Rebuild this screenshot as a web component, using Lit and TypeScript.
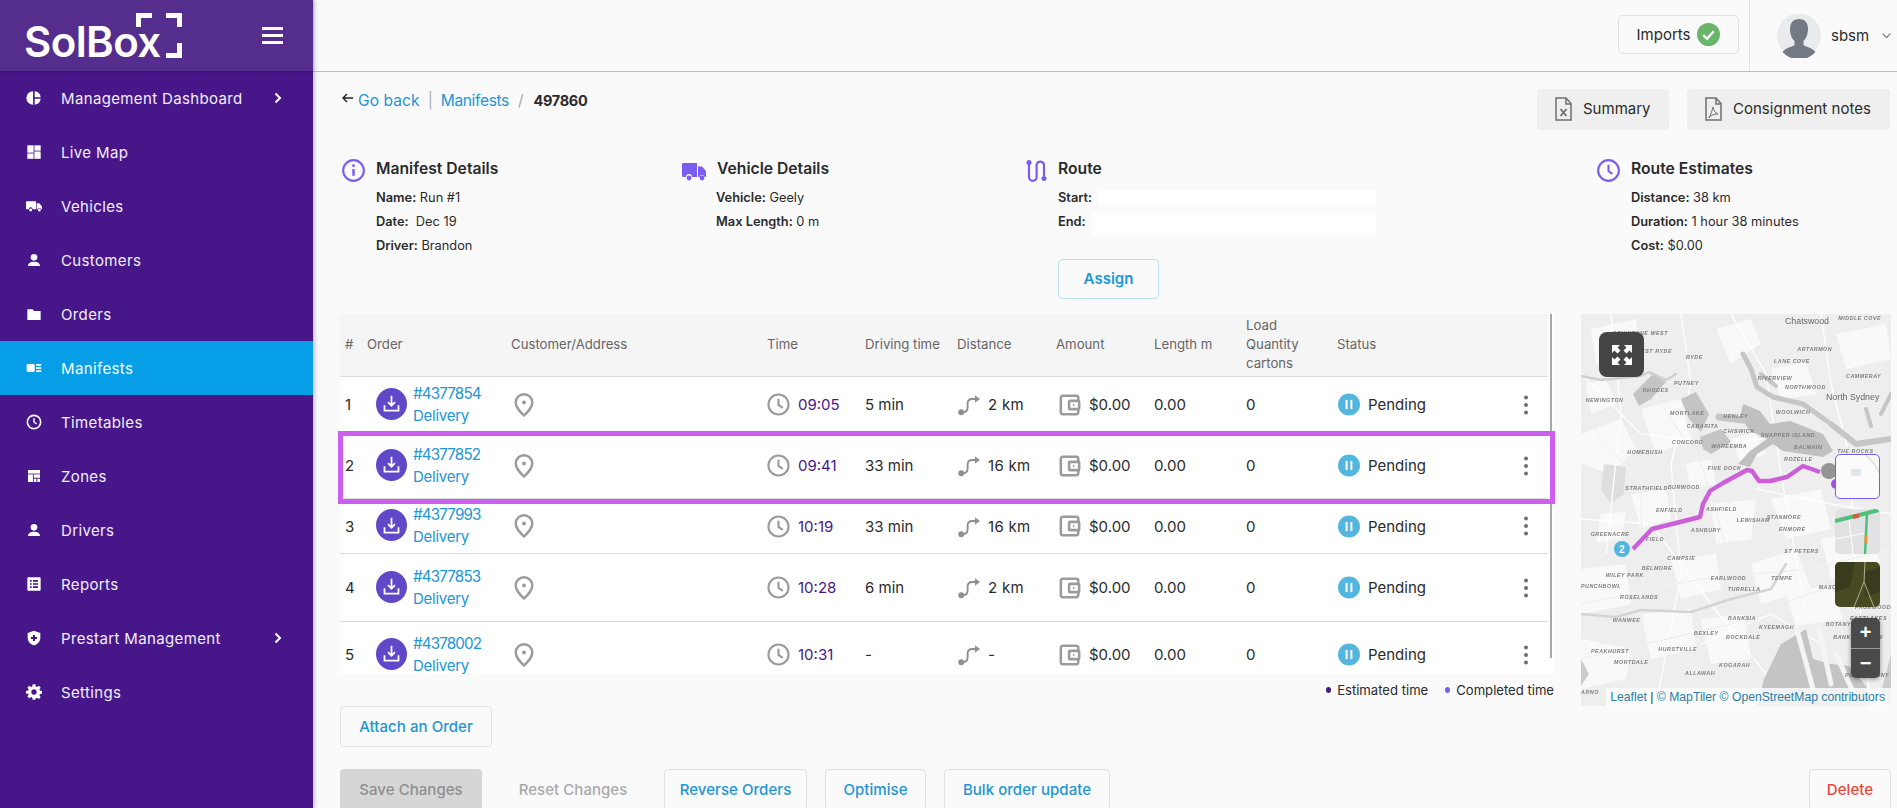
import { LitElement, html, css, svg } from "lit";
import { customElement } from "lit/decorators.js";

const I = {
  pie: svg`<path d="M10.600 2a10 10 0 0 0 0 20z"/><path d="M13 2a10 10 0 0 1 9 9h-9z"/><path d="M13 13.200h9a10 10 0 0 1-9 8.800z"/>`,
  map: svg`<rect x="2" y="2" width="9.400" height="11"/><rect x="12.600" y="2" width="9.400" height="8"/><rect x="2" y="14.200" width="9.400" height="8"/><rect x="12.600" y="11.200" width="9.400" height="11"/>`,
  truck: svg`<path d="M0 6.500C0 5.600.7 5 1.500 5H15v12H10a3 3 0 0 0-6 0H1.500C.7 17 0 16.400 0 15.500z"/><path d="M16 8h4l4 4.600V17h-1.200a3 3 0 0 0-5.600 0H16z"/><circle cx="7" cy="18" r="2.200"/><circle cx="20" cy="18" r="2.200"/>`,
  person: svg`<circle cx="12" cy="8" r="5"/><path d="M3 21c0-4.500 4-6.500 9-6.500s9 2 9 6.500z"/>`,
  folder: svg`<path d="M2 5h8l2 2.500h10V21H2z"/>`,
  card: svg`<rect x="1" y="6" width="12" height="12" rx="2"/><rect x="15" y="6" width="8" height="2.600"/><rect x="15" y="10.700" width="8" height="2.600"/><rect x="15" y="15.400" width="8" height="2.600"/>`,
  clockW: svg`<circle cx="12" cy="12" r="10" fill="none" stroke="currentColor" stroke-width="2.400"/><path d="M12 6.500V12l3.800 3" fill="none" stroke="currentColor" stroke-width="2.200"/>`,
  zones: svg`<rect x="3" y="3" width="18" height="5.400"/><rect x="3" y="9.600" width="7.400" height="11.400"/><rect x="11.600" y="9.600" width="9.400" height="5"/><rect x="11.600" y="16" width="4" height="5"/><rect x="17" y="16" width="4" height="5"/>`,
  report: svg`<path fill-rule="evenodd" d="M3.500 2h17A1.500 1.500 0 0 1 22 3.500v17a1.500 1.500 0 0 1-1.500 1.500h-17A1.500 1.500 0 0 1 2 20.500v-17A1.500 1.500 0 0 1 3.500 2zM6 6v2.500h2.500V6zm4.500 0v2.500H18V6zM6 10.700v2.500h2.500v-2.500zm4.500 0v2.500H18v-2.500zM6 15.500V18h2.500v-2.500zm4.500 0V18H18v-2.500z"/>`,
  shield: svg`<path fill-rule="evenodd" d="M12 1l9.500 3.500v7c0 5.500-4 9.800-9.500 11.500C6.500 21.300 2.500 17 2.500 11.500v-7zM10.500 7.500v3h-3v3h3v3h3v-3h3v-3h-3v-3z"/>`,
  gear: svg`<path fill-rule="evenodd" d="M10 1h4l.7 3.200 1.700.7L19.200 3l2.800 2.800-1.900 2.800.7 1.700L24 11v4l-3.200.6-.7 1.700 1.900 2.800-2.800 2.800-2.800-1.900-1.700.7L14 24h-4l-.6-3.300-1.700-.7-2.800 1.900-2.800-2.800 1.900-2.800-.7-1.700L0 15v-4l3.300-.7.700-1.700L2.100 5.800 4.900 3l2.800 1.900 1.700-.7zM12 8.500a4 4 0 1 0 0 8 4 4 0 0 0 0-8z" transform="translate(0 -.5)"/>`,
};

const nav: [string, any, boolean?, boolean?][] = [
  ["Management Dashboard", I.pie, true],
  ["Live Map", I.map],
  ["Vehicles", I.truck],
  ["Customers", I.person],
  ["Orders", I.folder],
  ["Manifests", I.card, false, true],
  ["Timetables", I.clockW],
  ["Zones", I.zones],
  ["Drivers", I.person],
  ["Reports", I.report],
  ["Prestart Management", I.shield, true],
  ["Settings", I.gear],
];

const rows = [
  ["1", "#4377854", "09:05", "5 min", "2 km"],
  ["2", "#4377852", "09:41", "33 min", "16 km"],
  ["3", "#4377993", "10:19", "33 min", "16 km"],
  ["4", "#4377853", "10:28", "6 min", "2 km"],
  ["5", "#4378002", "10:31", "-", "-"],
];

const labels: [string, number, number][] = [
  ["MIDDLE COVE",805,22],["ARTARMON",682,115],["LANE COVE",612,152],["CAMMERAY",828,197],["RIVERVIEW",563,202],["NORTHWOOD",645,230],
  ["DENISTONE WEST",128,68],["WEST RYDE",197,120],["RYDE",348,140],["PUTNEY",312,218],["RHODES",218,238],["NEWINGTON",47,268],["MORTLAKE",300,308],
  ["HENLEY",460,315],["CABARITA",350,345],["CHISWICK",460,360],["SNAPPER ISLAND",572,374],["WOOLWICH",617,303],["CONCORD",306,394],["WAREEMBA",424,405],
  ["BALMAIN",672,410],["THE ROCKS",802,420],["HOMEBUSH",172,423],["ROZELLE",642,446],["FIVE DOCK",413,473],["STRATHFIELD",166,533],["BURWOOD",293,528],
  ["ENFIELD",258,597],["ASHFIELD",408,594],["LEWISHAM",500,629],["STANMORE",590,619],["ENMORE",627,654],["GREENACRE",62,670],["ASHBURY",363,657],
  ["FIELD",228,684],["ST PETERS",643,722],["CAMPSIE",292,742],["BELMORE",215,771],["WILEY PARK",107,792],["EARLWOOD",422,803],["TEMPE",604,803],
  ["TURRELLA",473,835],["PUNCHBOWL",33,827],["ROSELANDS",150,858],["MASCOT",746,828],["WANWEE",128,927],["BANKSIA",474,922],["ROCKDALE",468,978],
  ["KYEEMAGH",567,948],["BEXLEY",372,967],["BOTANY",767,940],["BANKSMEADOW",790,980],["EASTLAKES",840,922],["PAGEWOOD",855,888],["PEAKHURST",63,1022],
  ["HURSTVILLE",265,1016],["MORTDALE",132,1055],["KOGARAH",447,1062],["ALLAWAH",345,1087],["PORT BOTANY",825,1092],["ARNO",33,1143],
];

const whites = [
  "M0 120 L40 105 L55 135 L30 160 L0 150Z","M60 95 L100 85 L110 125 L75 140Z","M135 15 L170 5 L180 30 L150 50Z","M190 55 L225 48 L235 80 L200 85Z",
  "M50 180 L85 175 L90 205 L60 215Z","M130 190 L175 185 L170 225 L135 230Z","M190 185 L240 175 L250 215 L205 225Z","M0 255 L45 250 L50 290 L0 300Z",
  "M90 245 L135 240 L140 275 L100 285Z","M170 250 L215 235 L230 275 L180 290Z","M60 300 L110 295 L115 335 L70 345Z","M120 305 L165 300 L170 345 L130 350Z",
  "M240 225 L285 215 L300 250 L250 265Z","M255 20 L305 10 L310 45 L265 55Z","M10 15 L55 5 L60 40 L15 50Z","M0 325 L50 335 L45 365 L0 375Z","M205 280 L250 270 L262 305 L215 312Z",
  "M20 200 L45 198 L40 225 L15 228Z","M105 150 L130 145 L135 170 L110 175Z","M5 70 L25 65 L35 90 L10 100Z","M150 125 L175 118 L185 140 L160 150Z",
];
const roads = [
  "M0 100 L60 170 L62 392","M0 235 L120 205 L200 160 L310 130","M0 290 L120 265 L230 255 L310 235","M0 345 L150 310 L200 290 L270 265","M60 60 L120 150 L160 280 L180 392",
  "M150 0 L185 60 L200 160 L225 300","M240 0 L250 70 L268 140 L275 260 L290 392","M0 60 L60 120 L140 130 L220 120","M100 0 L110 70 L90 150 L100 260 L75 392","M30 0 L40 100 L25 240",
  "M175 175 L250 190 L310 200","M120 330 L190 300 L240 330","M0 205 L70 210 L130 290 L210 392",
];

const mapArt = svg`
  <rect width="310" height="392" fill="#eeeeee"/>
  ${whites.map(d => svg`<path d=${d} fill="#f9f9f9"/>`)}
  <path d="M23 150 L45 153 L43 180 L30 190 L20 175Z" fill="#dedede"/>
  ${roads.map(d => svg`<path d=${d} fill="none" stroke="#fff" stroke-width="1.300"/>`)}
  ${roads.slice(0,5).map(d => svg`<path d=${d} fill="none" stroke="#dcdcdc" stroke-width=".6"/>`)}
  <path fill="#c0c0c0" d="M162 90 L179 97 L189 110 L209 107 L222 112 L242 120 L252 137 L242 143 L222 140 L202 137 L192 130 L176 140 L169 153 L157 150 L169 137 L186 125 L169 117 L159 103Z"/>
  <path fill="#c4c4c4" d="M119 123 L140 115 L150 128 L130 140 L122 135Z M52 80 L72 60 L85 68 L70 85 L58 92Z M100 85 L115 78 L128 100 L120 118 L108 105Z"/>
  <g fill="none" stroke="#c6c6c6" stroke-linejoin="round" stroke-linecap="round">
    <path d="M0 62 L20 66 L60 62 L68 58 L85 66 L95 60" stroke="#cfcfcf" stroke-width="2.500"/>
    <path d="M138 103 L162 106" stroke-width="7"/>
    <path d="M162 40 L170 55 L176 73 L192 83 L222 90 L246 107" stroke-width="5"/>
    <path d="M250 110 L275 130 L310 125" stroke-width="6"/>
    <path d="M180 60 L195 72 M285 95 L290 112 M300 100 L310 80" stroke-width="4"/>
    <path d="M0 300 L35 303 L60 296 L110 298 L150 285 L190 275 L205 250" stroke="#d4d4d4" stroke-width="2.500"/>
  </g>
  <path d="M176 392 L183 365 L200 330 L225 315 L232 345 L250 350 L268 352 L285 372 L290 392Z" fill="#c4c4c4"/>
  <path d="M215 312 L232 375 M238 315 L250 370 M255 340 L272 378" stroke="#f4f4f4" stroke-width="5" fill="none" stroke-linecap="round"/>
  <path d="M300 378 L310 340 L310 392Z M0 345 L8 360 L0 372Z" fill="#cccccc"/>
  ${labels.map(([t,x,y]) => svg`<text class="lbl" x=${(x-33)/3} y=${(y-10)/3+2}>${t}</text>`)}
  <text class="city" x="204" y="10">Chatswood</text>
  <text class="city" x="245" y="86">North Sydney</text>
  <polyline points="52,235 71,215 119,203 122,190 129,177 142,169 166,156 171,157 178,167 189,167 206,163 222,152 239,158" fill="none" stroke="#cb5fd9" stroke-width="4.400" stroke-linejoin="round"/>
  <circle cx="248" cy="157" r="8" fill="#959595"/>
  <circle cx="255" cy="170" r="5" fill="#a650e0"/>
  <circle cx="41" cy="235" r="8" fill="#52b6de"/>
  <text class="mk" x="41" y="239">2</text>
`;

@customElement("app-root")
export class AppRoot extends LitElement {
  static styles = css`
    :host { display: block; width: 1897px; height: 808px; overflow: hidden; background: #fafafa; font-family: Inter, "Liberation Sans", sans-serif; color: #2b2b2b; }
    * { box-sizing: border-box; }
    svg { display: block; flex: none; }
    .app { display: flex; height: 808px; }

    .side { width: 313px; flex: none; background: #47178a; color: #f3eefb; box-shadow: 2px 0 4px rgba(60,30,120,.25); position: relative; z-index: 2; }
    .brand { height: 71px; background: #552d8d; box-shadow: 0 1px 2px rgba(0,0,0,.3); display: flex; align-items: center; padding-left: 24px; position: relative; }
    .logo { font-size: 42px; font-weight: 600; color: #fff; letter-spacing: -.6px; line-height: 1; margin-top: 12px; }
    .marks { margin: 13px 0 0 -25px; align-self: flex-start; }
    .burger { margin-left: auto; margin-right: 30px; display: flex; flex-direction: column; gap: 4px; }
    .burger i { display: block; width: 21px; height: 3px; background: #fff; }
    .item { height: 54px; display: flex; align-items: center; padding-left: 26px; font-size: 15px; letter-spacing: .36px; }
    .item.on { background: #069ee6; color: #fff; }
    .item svg.ic { width: 16px; height: 16px; fill: currentColor; color: #fff; margin-right: 19px; }
    .item .chev { margin-left: auto; margin-right: 31px; }

    .main { flex: 1; min-width: 0; display: flex; flex-direction: column; }
    .top { height: 72px; flex: none; border-bottom: 1px solid #bdbdbd; display: flex; justify-content: flex-end; padding-right: 6px; }
    .imports { width: 121px; height: 39px; margin-top: 15px; border: 1px solid #e2e2e2; border-radius: 5px; display: flex; align-items: center; justify-content: center; gap: 7px; font-size: 15px; margin-right: 10px; }
    .user { width: 142px; border-left: 1px solid #e2e2e2; display: flex; align-items: center; padding-left: 27px; font-size: 15px; }
    .user .nm { margin-left: 10px; }
    .user .ch { margin-left: auto; }

    .content { padding: 17px 6px 0 27px; flex: 1; min-height: 0; }
    .crumbs { display: flex; justify-content: space-between; align-items: flex-start; height: 41px; }
    .bc { display: flex; align-items: center; font-size: 15.500px; margin-top: 1px; height: 20px; padding-left: 2px; }
    .back { margin: -4px 5px 0 0; }
    .bc a { color: #2196d3; letter-spacing: .1px; }
    .bc a.m { letter-spacing: -.35px; }
    .bc .sep { color: #aaa; margin: 0 8px; }
    .bc .sep.sl { margin: 0 10px 0 9px; }
    .bc b { font-weight: 700; color: #2b2b2b; font-size: 14.500px; letter-spacing: -.3px; }
    .dl { display: flex; gap: 18px; margin-right: 1px; }
    .dl div { height: 41px; background: #efefef; border-radius: 4px; display: flex; align-items: center; font-size: 15px; gap: 11px; padding: 0 0 2px 18px; }
    .dl .s { width: 132px; }
    .dl .c { width: 203px; letter-spacing: .02px; }

    .details { display: grid; grid-template-columns: 340px 344px 571px 1fr; margin-top: 29px; height: 155px; padding-left: 2px; }
    .h { display: flex; align-items: flex-start; gap: 11px; height: 23px; font-size: 15.700px; line-height: 20px; font-weight: 600; color: #2b2b2b; }
    .lines { padding-left: 34px; margin-top: 4px; font-size: 12.800px; line-height: 24px; }
    .lines b { font-weight: 600; }
    .rt .lines { padding-left: 32px; width: 350px; }
    .rline { display: flex; gap: 6px; height: 24px; align-items: center; }
    .blank { flex: 1; background: #fff; height: 16px; }
    .blank.e { height: 22px; margin-top: 4px; }
    .assign { margin: 25px 0 0 32px; width: 101px; height: 40px; padding-bottom: 2px; border: 1px solid #bfe2f3; border-radius: 4px; display: flex; align-items: center; justify-content: center; color: #2196d3; font-size: 15px; font-weight: 600; }

    .mid { display: flex; gap: 27px; align-items: flex-start; }
    .left { width: 1214px; flex: none; }
    .table { position: relative; height: 360px; overflow-x: visible; overflow-y: clip; background: #fff; }
    .grid { display: grid; grid-template-columns: 22px 144px 256px 98px 92px 99px 98px 92px 91px 184px 22px; padding-left: 5px; width: 1208px; }
    .head { height: 63px; padding-bottom: 2px; background: #f5f5f5; border-bottom: 1px solid #ddd; color: #666; font-size: 13.200px; line-height: 19px; align-items: center; }
    .row { align-items: center; font-size: 15px; border-bottom: 1px solid #ddd; background: #fff; position: relative; }
    .r1 { height: 56px; } .r2 { height: 66px; } .r3 { height: 55px; } .r4 { height: 68px; } .r5 { height: 66px; }
    .r2::after { content: ""; position: absolute; left: -2px; right: -7px; top: -2px; bottom: -6px; border: 5px solid #cc5ff0; z-index: 3; pointer-events: none; }
    .scroll { position: absolute; left: 1210px; top: 0; width: 2px; height: 344px; background: #a8a8a8; z-index: 1; }
    .order { display: flex; align-items: center; padding-left: 9px; gap: 6px; color: #2196d3; line-height: 22px; letter-spacing: -.25px; }
    .order .num { letter-spacing: -.85px; font-size: 15.200px; }
    .order .circle { width: 31px; height: 32px; border-radius: 50%; background: #6048c8; display: flex; align-items: center; justify-content: center; flex: none; margin-top: -2px; }
    .cellic { display: flex; align-items: center; gap: 8px; }
    .pin { padding-left: 3px; }
    .time { color: #47178a; }
    .dist { padding-left: 1px; letter-spacing: .3px; }
    .amt { padding-left: 3px; }
    .pend { padding-left: 1px; gap: 8px; }
    .dots { display: flex; }

    .legend { height: 32px; display: flex; justify-content: flex-end; align-items: center; font-size: 13.100px; gap: 5px; }
    .legend i { width: 5px; height: 6px; border-radius: 50%; background: #47178a; margin-right: 1px; }
    .legend i.b { background: #7a5cf0; margin-left: 12px; }
    .btn { display: flex; align-items: center; justify-content: center; height: 41px; border: 1px solid #e0e0e0; border-radius: 4px; color: #2196d3; font-size: 15px; font-weight: 500; letter-spacing: .05px; }
    .attach { width: 152px; }

    .map { position: relative; width: 310px; height: 392px; flex: none; overflow: hidden; }
    .art { filter: blur(.35px); }
    .map .lbl { font: italic 600 5.300px "Liberation Sans", sans-serif; fill: #7d7d7d; letter-spacing: .55px; }
    .map .city { font: 400 8.800px "Liberation Sans", sans-serif; fill: #666; }
    .map .mk { font: 700 10px "Liberation Sans", sans-serif; fill: #fff; text-anchor: middle; }
    .fs { position: absolute; left: 18px; top: 18px; width: 45px; height: 45px; background: #454545; border-radius: 8px; display: flex; align-items: center; justify-content: center; }
    .thumb { position: absolute; left: 254px; width: 45px; height: 45px; border-radius: 5px; overflow: hidden; }
    .thumb.a { top: 140px; background: #fbfbfb; border: 1px solid #7a5cf0; }
    .thumb.b { top: 195px; }
    .thumb.c { top: 248px; }
    .zoomc { position: absolute; left: 270px; top: 304px; width: 29px; height: 60px; background: #4a4a4a; border-radius: 5px; color: #fff; display: flex; flex-direction: column; font: 700 20px "Liberation Sans", sans-serif; box-shadow: 0 1px 5px rgba(0,0,0,.4); }
    .zoomc span { flex: 1; display: flex; align-items: center; justify-content: center; }
    .zoomc span + span { border-top: 1px solid #999; }
    .attr { position: absolute; right: 0; bottom: 0; height: 18px; width: 285px; background: rgba(255,255,255,.78); font: 12.200px "Liberation Sans", sans-serif; color: #333; line-height: 18px; text-align: right; padding-right: 6px; white-space: pre; }
    .attr a { color: #2a7fa5; }

    .actions { display: flex; margin-top: 22px; height: 41px; }
    .save { width: 142px; background: #d6d6d6; border: none; color: #8f8f8f; }
    .reset { width: 182px; border: none; color: #aaa; }
    .rev { width: 143px; } .opt { width: 101px; margin-left: 18px; } .bulk { width: 166px; margin-left: 18px; }
    .del { width: 82px; margin-left: auto; color: #e8473b; }
  `;

  private ic(name: any) {
    return html`<svg class="ic" viewBox="0 0 24 24">${name}</svg>`;
  }

  private row(r: string[], i: number) {
    return html`<div class="grid row r${i + 1}">
      <div>${r[0]}</div>
      <div class="order">
        <span class="circle"><svg width="21" height="21" viewBox="0 0 24 24" fill="none" stroke="#fff" stroke-width="2"><path d="M12 3v11M8 10.500l4 4 4-4"/><path d="M4 14v6h16v-6"/></svg></span>
        <span><span class="num">${r[1]}</span><br />Delivery</span>
      </div>
      <div class="pin"><svg width="20" height="24" viewBox="0 0 19 24" fill="none" stroke="#9b9b9b" stroke-width="2.400"><path d="M9.500 22.500C5 18 1.200 14.300 1.200 9.500a8.300 8.300 0 0 1 16.600 0c0 4.800-3.800 8.500-8.300 13z"/><circle cx="9.500" cy="9.500" r="1.900" fill="#9b9b9b" stroke="none"/></svg></div>
      <div class="cellic time"><svg width="23" height="23" viewBox="0 0 24 24" fill="none" stroke="#9b9b9b" stroke-width="2.200"><circle cx="12" cy="12" r="10.500"/><path d="M12 6v6.500l4.500 3"/></svg>${r[2]}</div>
      <div>${r[3]}</div>
      <div class="cellic dist"><svg width="22" height="23" viewBox="0 0 24 24"><circle cx="3.500" cy="20.500" r="3.200" fill="#8f8f8f"/><path d="M5 20.500c4 0 5.500-2 5.500-5.500v-4c0-3 1.500-5 5-5h3.500" fill="none" stroke="#8f8f8f" stroke-width="2"/><path d="M18.500 2l5.500 4-5.500 4z" fill="#8f8f8f"/></svg>${r[4]}</div>
      <div class="cellic amt"><svg width="22" height="24" viewBox="0 0 24 24" fill="none" stroke="#9b9b9b" stroke-width="2.800"><path d="M21 7V4a2 2 0 0 0-2-2H4a2 2 0 0 0-2 2v16a2 2 0 0 0 2 2h15a2 2 0 0 0 2-2v-3"/><rect x="11" y="7.500" width="11" height="9" rx="1"/><circle cx="16" cy="12" r="1" fill="#9b9b9b" stroke="none"/></svg>$0.00</div>
      <div>0.00</div>
      <div>0</div>
      <div class="cellic pend"><svg width="22" height="23" viewBox="0 0 24 24"><circle cx="12" cy="12" r="12" fill="#52b6de"/><rect x="8.300" y="7" width="2.200" height="10" fill="#fff"/><rect x="13.500" y="7" width="2.200" height="10" fill="#fff"/></svg>Pending</div>
      <div class="dots"><svg width="10" height="24" viewBox="0 0 10 24" fill="#6e6e6e"><circle cx="5" cy="4.500" r="2"/><circle cx="5" cy="12" r="2"/><circle cx="5" cy="19.500" r="2"/></svg></div>
    </div>`;
  }

  render() {
    return html`<div class="app">
      <aside class="side">
        <div class="brand">
          <span class="logo">SolBox</span>
          <svg class="marks" width="46" height="45" viewBox="0 0 46 45" fill="none" stroke="#fff" stroke-width="5"><path d="M2.500 14V2.500H16M30 2.500h13.500V14M43.500 30v12.500H30"/></svg>
          <div class="burger"><i></i><i></i><i></i></div>
        </div>
        ${nav.map(([t, ic, ch, on]) => html`<div class="item ${on ? "on" : ""}">
          ${this.ic(ic)}<span>${t}</span>
          ${ch ? html`<svg class="chev" width="8" height="12" viewBox="0 0 8 12" fill="none" stroke="#fff" stroke-width="2"><path d="M1.500 1.500 6 6l-4.500 4.500"/></svg>` : ""}
        </div>`)}
      </aside>

      <div class="main">
        <header class="top">
          <div class="imports">Imports<svg width="23" height="23" viewBox="0 0 24 24"><circle cx="12" cy="12" r="12" fill="#6bb56b"/><path d="M6.500 12.500l4 4 7-8" fill="none" stroke="#fff" stroke-width="2.400"/></svg></div>
          <div class="user">
            <svg width="44" height="45" viewBox="0 0 44 45"><circle cx="22" cy="22.500" r="22" fill="#e9ebee"/><path d="M22 6c6 0 9 4 9 10 0 5-2 10-4.500 12v4c3 2 9 3 12 7a22 22 0 0 1-33 0c3-4 9-5 12-7v-4C15 26 13 21 13 16c0-6 3-10 9-10z" fill="#747a83"/></svg>
            <span class="nm">sbsm</span>
            <svg class="ch" width="9" height="6" viewBox="0 0 9 6" fill="none" stroke="#777" stroke-width="1.200"><path d="M.7.7 4.500 4.700 8.300.7"/></svg>
          </div>
        </header>

        <div class="content">
          <div class="crumbs">
            <div class="bc">
              <svg class="back" width="11" height="10" viewBox="0 0 11 10" fill="none" stroke="#222" stroke-width="1.400"><path d="M11 5H1.500M5 1 1 5l4 4"/></svg>
              <a>Go back</a><span class="sep">|</span><a class="m">Manifests</a><span class="sep sl">/</span><b>497860</b>
            </div>
            <div class="dl">
              <div class="s"><svg width="17" height="24" viewBox="0 0 17 24" fill="none" stroke="#707070" stroke-width="1.500"><path d="M1 1h10l5 5.500V23H1zM11 1v6h5"/><path d="M5.500 12l6 7M11.500 12l-6 7" stroke-width="1.800"/></svg>Summary</div>
              <div class="c"><svg width="17" height="24" viewBox="0 0 17 24" fill="none" stroke="#707070" stroke-width="1.500"><path d="M1 1h10l5 5.500V23H1zM11 1v6h5"/><path d="M8 10c1 4 2 6 5 7-4 0-7 1-9 4 2-4 3-7 4-11z" stroke-width="1"/></svg>Consignment notes</div>
            </div>
          </div>

          <div class="details">
            <div>
              <div class="h"><svg width="23" height="23" viewBox="0 0 24 24" fill="none" stroke="#7a5cf0" stroke-width="2.200"><circle cx="12" cy="12" r="10.800"/><path d="M12 10.500v7" stroke-width="2.600"/><circle cx="12" cy="7" r="1.500" fill="#7a5cf0" stroke="none"/></svg>Manifest Details</div>
              <div class="lines"><div><b>Name:</b> Run #1</div><div><b>Date:</b>&nbsp; Dec 19</div><div><b>Driver:</b> Brandon</div></div>
            </div>
            <div>
              <div class="h"><svg width="24" height="23" viewBox="0 0 24 23" fill="#7a5cf0"><path d="M0 5.500C0 4.600.7 4 1.500 4H15v14H10a3 3 0 0 0-6 0H1.500C.7 18 0 17.400 0 16.500z"/><path d="M16 7.500h4l4 4.500v6h-1.200a3 3 0 0 0-5.600 0H16z"/><circle cx="7" cy="19" r="2.400"/><circle cx="20" cy="19" r="2.400"/></svg>Vehicle Details</div>
              <div class="lines"><div><b>Vehicle:</b> Geely</div><div><b>Max Length:</b> 0 m</div></div>
            </div>
            <div class="rt">
              <div class="h"><svg width="21" height="23" viewBox="0 0 21 23" fill="none" stroke="#7a5cf0" stroke-width="2.200"><circle cx="3" cy="3.500" r="2.500" fill="#7a5cf0" stroke="none"/><circle cx="18" cy="19.500" r="2.500" fill="#7a5cf0" stroke="none"/><path d="M3 5v13a3.800 3.800 0 0 0 7.600 0V5.500a3.800 3.800 0 0 1 7.400 0V17"/></svg>Route</div>
              <div class="lines">
                <div class="rline"><b>Start:</b><span class="blank"></span></div>
                <div class="rline"><b>End:</b><span class="blank e"></span></div>
              </div>
              <div class="assign">Assign</div>
            </div>
            <div>
              <div class="h"><svg width="23" height="23" viewBox="0 0 24 24" fill="none" stroke="#7a5cf0" stroke-width="2.200"><circle cx="12" cy="12" r="10.800"/><path d="M12 6v6.500l4 3"/></svg>Route Estimates</div>
              <div class="lines"><div><b>Distance:</b> 38 km</div><div><b>Duration:</b> 1 hour 38 minutes</div><div><b>Cost:</b> $0.00</div></div>
            </div>
          </div>

          <div class="mid">
            <div class="left">
              <div class="table">
                <div class="scroll"></div>
                <div class="grid head">
                  <div>#</div><div>Order</div><div>Customer/Address</div><div>Time</div><div>Driving time</div><div>Distance</div><div>Amount</div><div>Length m</div><div>Load<br />Quantity<br />cartons</div><div>Status</div><div></div>
                </div>
                ${rows.map((r, i) => this.row(r, i))}
              </div>
              <div class="legend"><i></i>Estimated time<i class="b"></i>Completed time</div>
              <div class="btn attach">Attach an Order</div>
            </div>
            <div class="map">
              <svg class="art" width="310" height="392" viewBox="0 0 310 392">${mapArt}</svg>
              <div class="fs"><svg width="24" height="24" viewBox="0 0 24 24" fill="#fff"><path d="M2 2h8L7.500 4.500 10.500 7.500 7.500 10.500 4.500 7.500 2 10zM22 2v8l-2.500-2.500-3 3-3-3 3-3L14 2zM2 22v-8l2.500 2.500 3-3 3 3-3 3L10 22zM22 22h-8l2.500-2.500-3-3 3-3 3 3L22 14z"/></svg></div>
              <div class="thumb a"><svg width="43" height="43" viewBox="0 0 43 43"><path d="M30 0c6 6 10 10 13 18" fill="none" stroke="#e4e4e4" stroke-width="2"/><rect x="15" y="14" width="10" height="7" fill="#dfe7e8"/></svg></div>
              <div class="thumb b"><svg width="45" height="45" viewBox="0 0 45 45"><rect width="45" height="45" fill="#e2e2e4"/><path d="M0 30 30 24M14 10 18 45" stroke="#fff" stroke-width="1"/><path d="M0 12 44 1" stroke="#4ec07a" stroke-width="4"/><path d="M32 4 30 45" stroke="#4ec07a" stroke-width="2.500"/><path d="M18 8l6-1.500" stroke="#e8503a" stroke-width="4"/><path d="M31 26v8" stroke="#f0933a" stroke-width="3"/></svg></div>
              <div class="thumb c"><svg width="45" height="45" viewBox="0 0 45 45"><rect width="45" height="45" fill="#4a4a22"/><path d="M0 0h20L15 25 0 30zM30 10l15-5v25l-15 5z" fill="#3a3a1c"/><path d="M30 0l-1 20-10 25M29 20l10 25" fill="none" stroke="#a9ad94" stroke-width="1"/></svg></div>
              <div class="zoomc"><span>+</span><span>−</span></div>
              <div class="attr"><a>Leaflet</a> | <a>© MapTiler</a> <a>© OpenStreetMap contributors</a></div>
            </div>
          </div>

          <div class="actions">
            <div class="btn save">Save Changes</div>
            <div class="btn reset">Reset Changes</div>
            <div class="btn rev">Reverse Orders</div>
            <div class="btn opt">Optimise</div>
            <div class="btn bulk">Bulk order update</div>
            <div class="btn del">Delete</div>
          </div>
        </div>
      </div>
    </div>`;
  }
}
